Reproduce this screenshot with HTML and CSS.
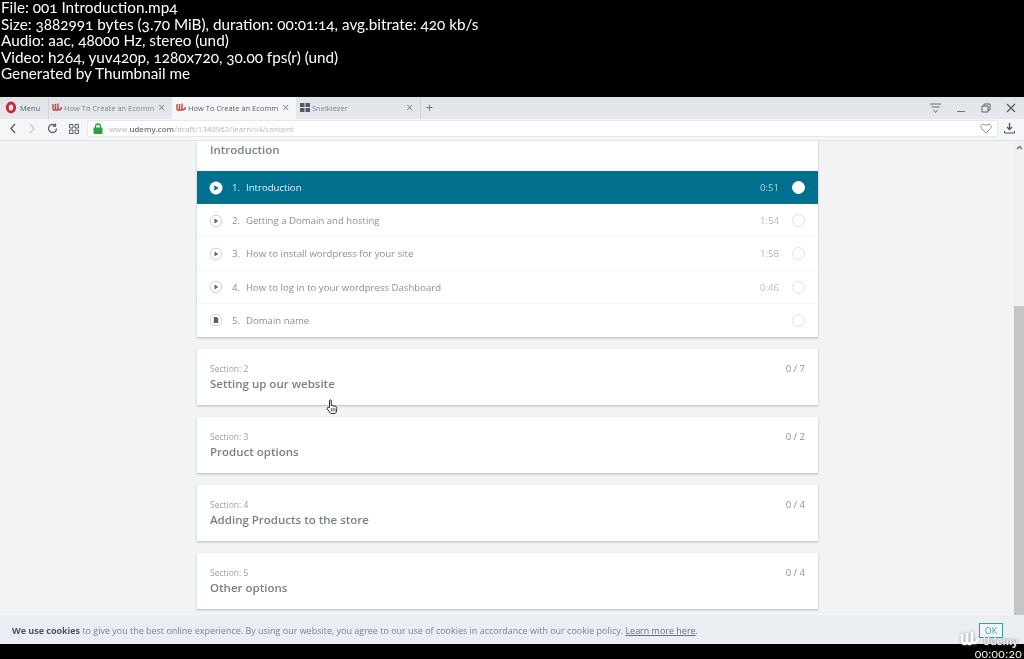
FILE: index.html
```html
<!DOCTYPE html>
<html lang="en">
<head>
    <meta charset="UTF-8">
    <meta name="viewport" content="width=device-width, initial-scale=1.0">
    <title>001 Introduction.mp4</title>
    <link rel="stylesheet" href="styles.css">
</head>

<body>
    <header class="file-info">
        <p>File: 001 Introduction.mp4</p>
        <p>Size: 3882991 bytes (3.70 MiB), duration: 00:01:14, avg.bitrate: 420 kb/s</p>
        <p>Audio: aac, 48000 Hz, stereo (und)</p>
        <p>Video: h264, yuv420p, 1280x720, 30.00 fps(r) (und)</p>
        <p>Generated by Thumbnail me</p>
    </header>

    <div class="frame">
        <div class="tab-bar">
            <div class="menu-btn">
                <svg width="12" height="13" viewBox="0 0 12 13"><ellipse cx="6" cy="6.500" rx="3.700" ry="4.500" fill="none" stroke="#c8272f" stroke-width="2.800"/></svg>
                <span>Menu</span>
            </div>
            <div class="tab tab-first">
                <svg class="tab-logo" width="10" height="9" viewBox="0 0 10 9"><path d="M1 1v4c0 3 2.500 3 2.500 0V1M3.500 5c0 3 2.500 3 2.500 0V.500M6 5c0 3 3.500 2 3.500-1" fill="none" stroke="#c4443c" stroke-width="1.400"/></svg>
                <span class="tab-title">How To Create an Ecomm</span>
                <span class="tab-close">&times;</span>
            </div>
            <div class="tab tab-active">
                <svg class="tab-logo" width="10" height="9" viewBox="0 0 10 9"><path d="M1 1v4c0 3 2.500 3 2.500 0V1M3.500 5c0 3 2.500 3 2.500 0V.500M6 5c0 3 3.500 2 3.500-1" fill="none" stroke="#c4443c" stroke-width="1.400"/></svg>
                <span class="tab-title">How To Create an Ecomm</span>
                <span class="tab-close">&times;</span>
            </div>
            <div class="tab">
                <svg class="tab-logo" width="10" height="9" viewBox="0 0 10 9"><path d="M0 0h4.500v4H0zM5.500 0H10v4H5.500zM0 5h4.500v4H0zM5.500 5H10v4H5.500z" fill="#555c66"/></svg>
                <span class="tab-title">Snelkiezer</span>
                <span class="tab-close">&times;</span>
            </div>
            <span class="new-tab">+</span>
            <div class="win-btns">
                <svg width="11" height="10" viewBox="0 0 11 10"><path d="M0 1h11M1.500 4h8M3.500 7L5.500 9.500 7.500 7" fill="none" stroke="#6b7178" stroke-width="1"/></svg>
                <svg width="10" height="10" viewBox="0 0 10 10"><path d="M1 8.500h8" stroke="#6b7178" stroke-width="1"/></svg>
                <svg width="10" height="10" viewBox="0 0 10 10"><path d="M1 3h6v6H1zM3 3V1h6v6H7" fill="none" stroke="#5b6168" stroke-width="1"/></svg>
                <svg width="10" height="10" viewBox="0 0 10 10"><path d="M1 1l8 8M9 1l-8 8" stroke="#4f555c" stroke-width="1.100"/></svg>
            </div>
        </div>

        <div class="address-bar">
            <div class="nav-btns">
                <svg width="8" height="11" viewBox="0 0 8 11"><path d="M6 1L2 5.500 6 10" fill="none" stroke="#5b6168" stroke-width="1.400"/></svg>
                <svg width="8" height="11" viewBox="0 0 8 11"><path d="M2 1l4 4.500L2 10" fill="none" stroke="#c9ccd0" stroke-width="1.400"/></svg>
                <svg width="11" height="11" viewBox="0 0 11 11"><path d="M9.500 5.500a4 4 0 1 1-1.200-2.900M8.500 0.500v2.500H6" fill="none" stroke="#5b6168" stroke-width="1.300"/></svg>
                <svg width="10" height="10" viewBox="0 0 10 10"><path d="M.5 .5h3.500v3.500H.5zM6 .5h3.500v3.500H6zM.5 6h3.500v3.500H.5zM6 6h3.500v3.500H6z" fill="none" stroke="#5b6168" stroke-width="1"/></svg>
            </div>
            <div class="url-box">
                <svg width="10" height="11" viewBox="0 0 10 11"><path d="M2.500 5V3.500a2.500 2.500 0 0 1 5 0V5" fill="none" stroke="#2f9e44" stroke-width="1.300"/><rect x="0.500" y="4.500" width="9" height="6.500" rx="1" fill="#2f9e44"/></svg>
                <span class="url">www.<b>udemy.com</b>/draft/1340962/learn/v4/content</span>
                <svg class="heart" width="12" height="11" viewBox="0 0 12 11"><path d="M6 10L1.500 5.500C-.5 3 2.500-.500 6 2.500 9.500-.500 12.500 3 10.500 5.500z" fill="none" stroke="#8d9298" stroke-width="1"/></svg>
            </div>
            <svg class="download" width="11" height="11" viewBox="0 0 11 11"><path d="M5.500 0v6M3 4l2.500 2.500L8 4" fill="none" stroke="#4f555c" stroke-width="1.300"/><path d="M.5 8v2h10V8" fill="none" stroke="#4f555c" stroke-width="1"/></svg>
        </div>

        <div class="page">
            <main class="course">
                <section class="card">
                    <h2 class="card-heading">Introduction</h2>
                    <ul class="lectures">
                        <li class="lecture lecture-active">
                            <svg class="lecture-icon" width="14" height="14" viewBox="0 0 14 14"><circle cx="7" cy="7" r="6.500" fill="#fff"/><path d="M5.300 4.200l4.400 2.800-4.400 2.800z" fill="#00708f"/></svg>
                            <span class="num">1.</span><span class="name">Introduction</span>
                            <span class="time">0:51</span><span class="check"></span>
                        </li>
                        <li class="lecture">
                            <svg class="lecture-icon" width="14" height="14" viewBox="0 0 14 14"><circle cx="7" cy="7" r="5.800" fill="#fff" stroke="#cfd1d4"/><path d="M5.500 4.600l3.800 2.400-3.800 2.400z" fill="#5d6166"/></svg>
                            <span class="num">2.</span><span class="name">Getting a Domain and hosting</span>
                            <span class="time">1:54</span><span class="check"></span>
                        </li>
                        <li class="lecture">
                            <svg class="lecture-icon" width="14" height="14" viewBox="0 0 14 14"><circle cx="7" cy="7" r="5.800" fill="#fff" stroke="#cfd1d4"/><path d="M5.500 4.600l3.800 2.400-3.800 2.400z" fill="#5d6166"/></svg>
                            <span class="num">3.</span><span class="name">How to install wordpress for your site</span>
                            <span class="time">1:58</span><span class="check"></span>
                        </li>
                        <li class="lecture">
                            <svg class="lecture-icon" width="14" height="14" viewBox="0 0 14 14"><circle cx="7" cy="7" r="5.800" fill="#fff" stroke="#cfd1d4"/><path d="M5.500 4.600l3.800 2.400-3.800 2.400z" fill="#5d6166"/></svg>
                            <span class="num">4.</span><span class="name">How to log in to your wordpress Dashboard</span>
                            <span class="time">0:46</span><span class="check"></span>
                        </li>
                        <li class="lecture">
                            <svg class="lecture-icon" width="14" height="14" viewBox="0 0 14 14"><circle cx="7" cy="7" r="5.800" fill="#fff" stroke="#cfd1d4"/><path d="M4.800 4h3l1.400 1.400V10H4.800z" fill="#5d6166"/></svg>
                            <span class="num">5.</span><span class="name">Domain name</span>
                            <span class="check"></span>
                        </li>
                    </ul>
                </section>

                <section class="card section-card">
                    <div>
                        <p class="section-label">Section: 2</p>
                        <h2 class="section-title">Setting up our website</h2>
                    </div>
                    <span class="section-count">0 / 7</span>
                </section>
                <section class="card section-card">
                    <div>
                        <p class="section-label">Section: 3</p>
                        <h2 class="section-title">Product options</h2>
                    </div>
                    <span class="section-count">0 / 2</span>
                </section>
                <section class="card section-card">
                    <div>
                        <p class="section-label">Section: 4</p>
                        <h2 class="section-title">Adding Products to the store</h2>
                    </div>
                    <span class="section-count">0 / 4</span>
                </section>
                <section class="card section-card">
                    <div>
                        <p class="section-label">Section: 5</p>
                        <h2 class="section-title">Other options</h2>
                    </div>
                    <span class="section-count">0 / 4</span>
                </section>
            </main>
            <div class="scrollbar">
                <svg width="7" height="5" viewBox="0 0 7 5"><path d="M1 4l2.500-2.500L6 4" fill="none" stroke="#6b7178" stroke-width="1.300"/></svg>
                <div class="scroll-thumb"></div>
            </div>
        </div>

        <div class="cookie-bar">
            <p><b>We use cookies</b> to give you the best online experience. By using our website, you agree to our use of cookies in accordance with our cookie policy. <a href="#">Learn more here</a>.</p>
            <button class="ok-btn">OK</button>
        </div>
    </div>

    <footer class="strip"></footer>

    <svg class="cursor" width="12" height="16" viewBox="0 0 12 16"><path d="M3.500 8.500V1.800c0-1.300 1.800-1.300 1.800 0V6.500l4 .8c1.200.3 1.700 1 1.500 2.200l-.6 3.500c-.1.800-.6 1.500-1.500 1.500H5.500c-.7 0-1.200-.4-1.600-1L1.300 10c-.8-1.300.8-2.300 1.700-1.200z" fill="#fff" stroke="#2a2a2a" stroke-width="1"/><path d="M5.500 9v3.500M7.200 9v3.500M8.900 9v3.500" stroke="#2a2a2a" stroke-width=".7"/></svg>

    <div class="watermark">
        <svg width="20" height="17" viewBox="0 0 20 17"><path d="M2 4v6c0 5 5 5 5 0V3M7 10c0 5 5 5 5 0V1.500M12 10c0 5 6 3 6-2" fill="none" stroke="#fff" stroke-width="2.800"/></svg>
        <span>Udemy</span>
    </div>
    <div class="timestamp">00:00:20</div>
</body>
</html>
```

FILE: styles.css
```css
* {
    box-sizing: border-box;
}

html {
    background-color: #000;
}

body {
    margin: 0;
    background-color: #000;
    font-family: "Open Sans", sans-serif;
    color: #686f7a;
    display: flex;
    flex-direction: column;
    height: 659px;
    overflow: hidden;
    position: relative;
    filter: blur(0.35px); /* the recording is soft */
}

p, h2, ul {
    margin: 0;
    padding: 0;
}

.file-info {
    height: 97px;
    flex: none;
    padding-left: 1px;
    color: #fff;
    font-family: Lato, sans-serif;
    font-size: 15.300px;
    line-height: 15px;
    font-variant-numeric: oldstyle-nums;
}

.file-info p {
    margin-bottom: 1.500px;
}

.frame {
    flex: 1;
    min-height: 0;
    display: flex;
    flex-direction: column;
    background-color: #f1f3f5;
}

/* browser chrome */
.tab-bar {
    height: 22px;
    flex: none;
    display: flex;
    align-items: stretch;
    background: linear-gradient(#dfe3e8, #e6e9ed);
    font-size: 7.500px;
    color: #80868d;
}

.menu-btn {
    width: 48px;
    display: flex;
    align-items: center;
    gap: 3px;
    padding: 0 0 1px 5px;
    font-size: 7.500px;
    color: #555c66;
}

.tab {
    width: 124px;
    display: flex;
    align-items: center;
    padding: 0 7px 1px 4px;
    gap: 2px;
}

.tab-first {
    padding-left: 3px;
    border-left: 1px solid #cfd3d8;
}

.tab-active {
    background-color: #f5f6f7;
    color: #5a6068;
}

.tab-title {
    flex: 1;
    white-space: nowrap;
    overflow: hidden;
}

.tab-close {
    font-size: 12px;
    color: #7a8087;
}

.new-tab {
    width: 18px;
    text-align: center;
    font-size: 13px;
    line-height: 20px;
    color: #6b7178;
    border-left: 1px solid #cfd3d8;
}

.win-btns {
    margin-left: auto;
    display: flex;
    align-items: center;
    gap: 15px;
    padding: 0 8px 1px 0;
}

.address-bar {
    height: 22px;
    flex: none;
    display: flex;
    align-items: center;
    padding-bottom: 2px;
    background-color: #f5f6f7;
    border-bottom: 1px solid #dfe2e5;
}

.nav-btns {
    width: 87px;
    display: flex;
    align-items: center;
    gap: 11px;
    padding-left: 9px;
}

.url-box {
    width: 911px;
    height: 17px;
    display: flex;
    align-items: center;
    gap: 6px;
    padding: 0 5px 0 5px;
    background-color: #fff;
    border: 1px solid #e6e8eb;
    border-radius: 2px;
}

.url {
    font-size: 7.900px;
    color: #b4b8bc;
}

.url b {
    color: #6b7178;
    font-weight: 600;
}

.heart {
    margin-left: auto;
}

.download {
    margin-left: 6px;
}

/* page content */
.page {
    flex: 1;
    min-height: 0;
    display: flex;
    overflow: hidden;
    background-color: #f1f3f5;
}

.course {
    width: 621px;
    margin-left: 197px;
    flex: none;
    display: flex;
    flex-direction: column;
    gap: 12px;
}

.card {
    background-color: #fff;
    box-shadow: 0 1px 2px rgba(41, 48, 59, 0.3);
    flex: none;
}

.card-heading {
    height: 30px;
    padding: 1px 13px 0;
    font-size: 11.500px;
    line-height: 16px;
    font-weight: 600;
    color: #7b8087;
}

.lectures {
    list-style: none;
}

.lecture {
    height: 33.250px;
    display: flex;
    align-items: center;
    padding: 0 13px 0 12px;
    font-size: 9.600px;
    color: #8a8f96;
    box-shadow: inset 0 -1px 0 #f4f5f6;
}

.lecture:last-child {
    box-shadow: none;
}

.lecture-icon {
    flex: none;
    margin-right: 9px;
}

.lecture-active {
    height: 33px;
    background-color: #00708f;
    box-shadow: none;
    color: #cdeaf2;
}

.lecture-active .name {
    color: #e3f3f7;
}

.num {
    width: 14px;
}

.time {
    margin-left: auto;
    color: #b4b7bb;
}

.lecture-active .time {
    color: #a9d4e0;
}

.check {
    width: 13px;
    height: 13px;
    margin-left: 13px;
    border-radius: 50%;
    border: 1px solid #dfe1e3;
    background-color: #fff;
}

.lecture > .name + .check {
    margin-left: auto;
}

.lecture-active .check {
    border-color: #fff;
}

.section-card {
    height: 56px;
    display: flex;
    justify-content: space-between;
    padding: 13px 13px 0;
}

.section-label {
    font-size: 8.500px;
    line-height: 13px;
    color: #9a9ea4;
}

.section-title {
    font-size: 11.500px;
    line-height: 18px;
    font-weight: 600;
    color: #7b8087;
}

.section-count {
    font-size: 9.500px;
    line-height: 14px;
    color: #8a8f96;
}

.scrollbar {
    margin-left: auto;
    width: 10px;
    display: flex;
    flex-direction: column;
    align-items: center;
    padding-top: 4px;
    background-color: #eff0f1;
}

.scroll-thumb {
    width: 100%;
    flex: 1;
    margin-top: 156px;
    background-color: #c3c5c7;
}

.cookie-bar {
    height: 29px;
    flex: none;
    display: flex;
    align-items: center;
    justify-content: space-between;
    padding: 0 21px 0 12px;
    background-color: #e9eef3;
    font-size: 8.980px;
    color: #7c8188;
    border-top: 1px solid #edf0f3;
}

.cookie-bar b {
    color: #50555c;
}

.cookie-bar a {
    color: #686f7a;
}

.ok-btn {
    width: 24px;
    height: 15px;
    padding: 0;
    background-color: #f3f6f8;
    border: 1px solid #3f9e96;
    font-family: inherit;
    font-size: 8.500px;
    color: #3f9e96;
}

.strip {
    height: 15px;
    flex: none;
    background-color: #000;
}

/* things that sit on top of the recording */
.cursor {
    position: absolute;
    left: 326px;
    top: 399px;
}

.watermark {
    position: absolute;
    right: 6px;
    top: 631px;
    display: flex;
    align-items: flex-end;
    gap: 3px;
    height: 16px;
    font-size: 10px;
    line-height: 12px;
    font-weight: 700;
    color: #e8eaec;
    text-shadow: 0 0 2px #6b7178;
}

.watermark svg {
    filter: drop-shadow(0 0 1px #8a8f96);
}

.timestamp {
    position: absolute;
    right: 2px;
    top: 648px;
    font-family: Lato, sans-serif;
    font-size: 12px;
    line-height: 11px;
    color: #f2f2f2;
    letter-spacing: .3px;
    font-variant-numeric: oldstyle-nums;
}
```
